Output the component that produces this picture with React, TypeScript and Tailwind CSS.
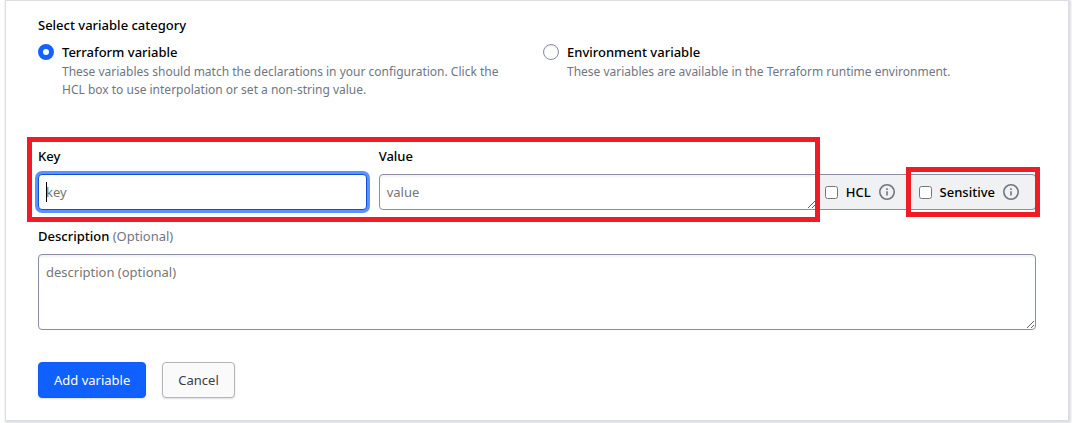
import { useState } from 'react'

const categories = [
  {
    id: 'terraform',
    label: 'Terraform variable',
    help: 'These variables should match the declarations in your configuration. Click the HCL box to use interpolation or set a non-string value.',
  },
  {
    id: 'env',
    label: 'Environment variable',
    help: 'These variables are available in the Terraform runtime environment.',
  },
]

function InfoIcon() {
  return (
    <svg viewBox="0 0 16 16" className="size-4 shrink-0 text-[#6f7682]" fill="none" stroke="currentColor" strokeWidth="1.6">
      <circle cx="8" cy="8" r="7.2" />
      <path d="M8 7.2v4.2" />
      <path d="M8 4.2v1.7" />
    </svg>
  )
}

function Flag({ id, label }: { id: string; label: string }) {
  return (
    <div className="flex items-center gap-2">
      <input id={id} type="checkbox" className="size-[13px]" />
      <label htmlFor={id} className="font-medium">{label}</label>
      <InfoIcon />
    </div>
  )
}

export default function App() {
  const [category, setCategory] = useState('terraform')

  return (
    <div className="bg-white pr-[3px] pb-0.5 pl-[5px] font-['Noto_Sans','Open_Sans',sans-serif] text-[13px] leading-[18px] text-black">
      <form
        className="border border-[#dcdee3] px-8 pt-[15px] pb-[22px] shadow-[1px_1px_2px_1px_#dcdee3]"
        onSubmit={e => e.preventDefault()}
      >
        <fieldset>
          <legend className="font-medium">Select variable category</legend>
          <div className="mt-[9px] grid grid-cols-2 gap-3">
            {categories.map(item => (
              <div key={item.id} className="flex items-start gap-2 pr-5">
                <input
                  id={item.id}
                  type="radio"
                  name="category"
                  checked={category === item.id}
                  onChange={() => setCategory(item.id)}
                  className="mt-px size-4 shrink-0 appearance-none rounded-full border border-[#8a8f9f] bg-white shadow-[inset_0_1px_2px_#e3e5ea] checked:border-[5px] checked:border-[#1563ff] checked:shadow-none"
                />
                <div>
                  <label htmlFor={item.id} className="block font-medium">{item.label}</label>
                  <p className="mt-0.5 text-[12px] text-[#6f7682]">{item.help}</p>
                </div>
              </div>
            ))}
          </div>
        </fieldset>

        <div className="mt-12 grid grid-cols-[1fr_2fr] gap-3">
          <div>
            <label htmlFor="key" className="block font-medium">Key</label>
            <div className="relative mt-[9px]">
              <input
                id="key"
                type="text"
                placeholder="key"
                className="block h-9 w-full rounded-[4px] border border-[#0f4fd6] bg-white px-[7px] ring-3 ring-[#5b92ff] outline-none placeholder:text-[#767676]"
              />
              <span className="absolute top-2 left-2 h-5 w-px bg-black" />
            </div>
          </div>
          <div className="relative">
            <label htmlFor="value" className="block font-medium">Value</label>
            <div className="mt-[9px] flex">
              <textarea
                id="value"
                rows={1}
                placeholder="value"
                className="block h-9 min-w-0 flex-1 rounded-l-[4px] border border-[#8a8f9f] bg-white px-[7px] py-2 shadow-[inset_0_2px_2px_#f1f2f5] outline-none placeholder:text-[#767676]"
              />
              <div className="flex items-center gap-6 rounded-r-[4px] border-y border-r border-[#8a8f9f] bg-[#f0f1f3] pr-4 pl-2">
                <Flag id="hcl" label="HCL" />
                <div className="relative">
                  <Flag id="sensitive" label="Sensitive" />
                  <div className="pointer-events-none absolute -inset-y-4 -right-[21px] -left-[13px] border-5 border-[#ef1c25]" />
                </div>
              </div>
            </div>
            {/* highlight around the key and value pair */}
            <div className="pointer-events-none absolute -top-[10px] right-[216px] -bottom-3 -left-[352px] border-5 border-[#ef1c25]" />
          </div>
        </div>

        <div className="mt-[17px]">
          <label htmlFor="description" className="block font-medium">
            Description <span className="font-normal text-[#6f7682]">(Optional)</span>
          </label>
          <textarea
            id="description"
            placeholder="description (optional)"
            className="mt-[9px] block h-[76px] w-full rounded-[4px] border border-[#8a8f9f] bg-white px-[7px] py-2 shadow-[inset_0_2px_2px_#f1f2f5] outline-none placeholder:text-[#767676]"
          />
        </div>

        <div className="mt-8 flex gap-4">
          <button type="submit" className="h-9 rounded-[4px] border border-[#0f5cf5] bg-[#1060ff] px-[15px] text-white shadow-[0_1px_2px_#dcdee3]">
            Add variable
          </button>
          <button type="button" className="h-9 rounded-[4px] border border-[#b4b5b8] bg-[#fafafa] px-[15px] text-[#3b3d45] shadow-[0_1px_2px_#dcdee3]">
            Cancel
          </button>
        </div>
      </form>
    </div>
  )
}
